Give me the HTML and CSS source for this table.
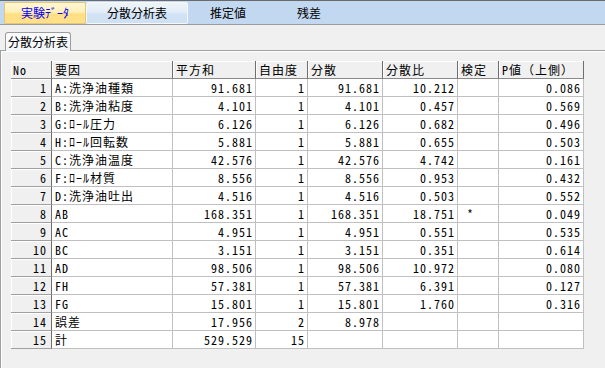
FILE: index.html
```html
<!DOCTYPE html>
<html lang="ja">
<head>
<meta charset="utf-8">
<title>分散分析表</title>
<link rel="stylesheet" href="styles.css">
</head>
<body>
<div class="topbar">
  <div class="tab tab-sel w1">実験ﾃﾞｰﾀ</div>
  <div class="tab tab-hover w2">分散分析表</div>
  <div class="tab w3">推定値</div>
  <div class="tab w4">残差</div>
</div>
<div class="subtabs">
  <div class="subtab">分散分析表</div>
</div>
<div class="panel">
  <table class="grid">
    <thead>
      <tr>
        <th class="c1">No</th>
        <th class="c2">要因</th>
        <th class="c3">平方和</th>
        <th class="c4">自由度</th>
        <th class="c5">分散</th>
        <th class="c6">分散比</th>
        <th class="c7">検定</th>
        <th class="c8">P値（上側）</th>
      </tr>
    </thead>
    <tbody>
      <tr><th class="rh">1</th><td>A:洗浄油種類</td><td class="n">91.681</td><td class="n">1</td><td class="n">91.681</td><td class="n">10.212</td><td></td><td class="n">0.086</td></tr>
      <tr><th class="rh">2</th><td>B:洗浄油粘度</td><td class="n">4.101</td><td class="n">1</td><td class="n">4.101</td><td class="n">0.457</td><td></td><td class="n">0.569</td></tr>
      <tr><th class="rh">3</th><td>G:ﾛｰﾙ圧力</td><td class="n">6.126</td><td class="n">1</td><td class="n">6.126</td><td class="n">0.682</td><td></td><td class="n">0.496</td></tr>
      <tr><th class="rh">4</th><td>H:ﾛｰﾙ回転数</td><td class="n">5.881</td><td class="n">1</td><td class="n">5.881</td><td class="n">0.655</td><td></td><td class="n">0.503</td></tr>
      <tr><th class="rh">5</th><td>C:洗浄油温度</td><td class="n">42.576</td><td class="n">1</td><td class="n">42.576</td><td class="n">4.742</td><td></td><td class="n">0.161</td></tr>
      <tr><th class="rh">6</th><td>F:ﾛｰﾙ材質</td><td class="n">8.556</td><td class="n">1</td><td class="n">8.556</td><td class="n">0.953</td><td></td><td class="n">0.432</td></tr>
      <tr><th class="rh">7</th><td>D:洗浄油吐出</td><td class="n">4.516</td><td class="n">1</td><td class="n">4.516</td><td class="n">0.503</td><td></td><td class="n">0.552</td></tr>
      <tr><th class="rh">8</th><td>AB</td><td class="n">168.351</td><td class="n">1</td><td class="n">168.351</td><td class="n">18.751</td><td class="mark">*</td><td class="n">0.049</td></tr>
      <tr><th class="rh">9</th><td>AC</td><td class="n">4.951</td><td class="n">1</td><td class="n">4.951</td><td class="n">0.551</td><td></td><td class="n">0.535</td></tr>
      <tr><th class="rh">10</th><td>BC</td><td class="n">3.151</td><td class="n">1</td><td class="n">3.151</td><td class="n">0.351</td><td></td><td class="n">0.614</td></tr>
      <tr><th class="rh">11</th><td>AD</td><td class="n">98.506</td><td class="n">1</td><td class="n">98.506</td><td class="n">10.972</td><td></td><td class="n">0.080</td></tr>
      <tr><th class="rh">12</th><td>FH</td><td class="n">57.381</td><td class="n">1</td><td class="n">57.381</td><td class="n">6.391</td><td></td><td class="n">0.127</td></tr>
      <tr><th class="rh">13</th><td>FG</td><td class="n">15.801</td><td class="n">1</td><td class="n">15.801</td><td class="n">1.760</td><td></td><td class="n">0.316</td></tr>
      <tr><th class="rh">14</th><td>誤差</td><td class="n">17.956</td><td class="n">2</td><td class="n">8.978</td><td></td><td></td><td></td></tr>
      <tr><th class="rh">15</th><td>計</td><td class="n">529.529</td><td class="n">15</td><td></td><td></td><td></td><td></td></tr>
    </tbody>
  </table>
</div>
</body>
</html>
```
FILE: styles.css
```css
html, body {
  margin: 0;
  padding: 0;
  background: #f0f0f0;
  width: 605px;
  height: 368px;
  overflow: hidden;
}

.topbar {
  display: flex;
  align-items: flex-start;
  height: 23px;
  padding-left: 4px;
  background: #c2d8f1;
  border-top: 1px solid #6a6a6a;
  border-bottom: 1px solid #9c9c9c;
  font-family: "Noto Sans CJK JP", sans-serif;
  font-size: 12px;
  color: #000;
}

.tab {
  box-sizing: border-box;
  height: 22px;
  margin-top: 1px;
  line-height: 20px;
  text-align: center;
  border: 1px solid transparent;
  white-space: nowrap;
}

.w1 { width: 82px; }
.w2 { width: 102px; }
.w3 { width: 80px; }
.w4 { width: 82px; }

.tab-sel {
  color: #0000ff;
  border-color: #e3c878;
  border-radius: 2px;
  background: linear-gradient(#fff7d6 0%, #ffefb8 45%, #ffdf82 55%, #ffe08c 100%);
}

.tab-hover {
  border-color: #f4f8fd;
  border-radius: 2px;
  background: linear-gradient(#eef4fb 0%, #e3edf8 45%, #d2e3f5 55%, #cfe0f3 100%);
}

.subtabs {
  display: flex;
  height: 25px;
  padding-left: 5px;
  box-sizing: border-box;
  padding-top: 7px;
  font-family: "Noto Sans CJK JP", sans-serif;
  font-size: 12px;
}

.subtab {
  position: relative;
  z-index: 1;
  box-sizing: border-box;
  width: 66px;
  height: 19px;
  line-height: 17px;
  text-align: center;
  border: 1px solid #9c9c9c;
  border-bottom: none;
  border-radius: 3px 3px 0 0;
  background: linear-gradient(#fbfcfe, #f1f4f8);
}

.panel {
  box-sizing: border-box;
  height: 318px;
  padding: 10px 0 0 10px;
  border-top: 1px solid #a0a0a0;
  border-left: 1px solid #a0a0a0;
  box-shadow: inset 1px 1px 0 #ffffff;
  background: #f0f0f0;
}

.grid {
  border-collapse: separate;
  border-spacing: 0;
  table-layout: fixed;
  width: 573px;
  font-family: "Noto Sans Mono CJK JP", "Noto Sans CJK JP", monospace;
  font-size: 12px;
  letter-spacing: 1px;
  color: #000;
}

.grid th,
.grid td {
  box-sizing: border-box;
  height: 18px;
  padding: 0 3px;
  line-height: 17px;
  font-weight: normal;
  white-space: nowrap;
  text-align: left;
}

.grid thead th {
  background: #f0f0f0;
  border-right: 1px solid #6e6e6e;
  border-bottom: 1px solid #8a8a8a;
  box-shadow: inset 1px 1px 0 #ffffff;
}

.grid thead th.c1 { padding-left: 2px; }

.c1 { width: 41px; }
.c2 { width: 121px; }
.c3 { width: 83px; }
.c4 { width: 52px; }
.c5 { width: 75px; }
.c6 { width: 75px; }
.c7 { width: 41px; }
.c8 { width: 85px; }

.grid th.rh {
  background: #f0f0f0;
  text-align: right;
  padding-right: 4px;
  border-right: 1px solid #6e6e6e;
  border-bottom: 1px solid #a0a0a0;
  box-shadow: inset 1px 1px 0 #ffffff;
}

.grid td {
  background: #ffffff;
  border-right: 1px solid #c0c0c0;
  border-bottom: 1px solid #c0c0c0;
}

.grid td.n {
  text-align: right;
  padding-right: 2px;
}

.grid td.mark {
  padding-left: 9px;
}
```
